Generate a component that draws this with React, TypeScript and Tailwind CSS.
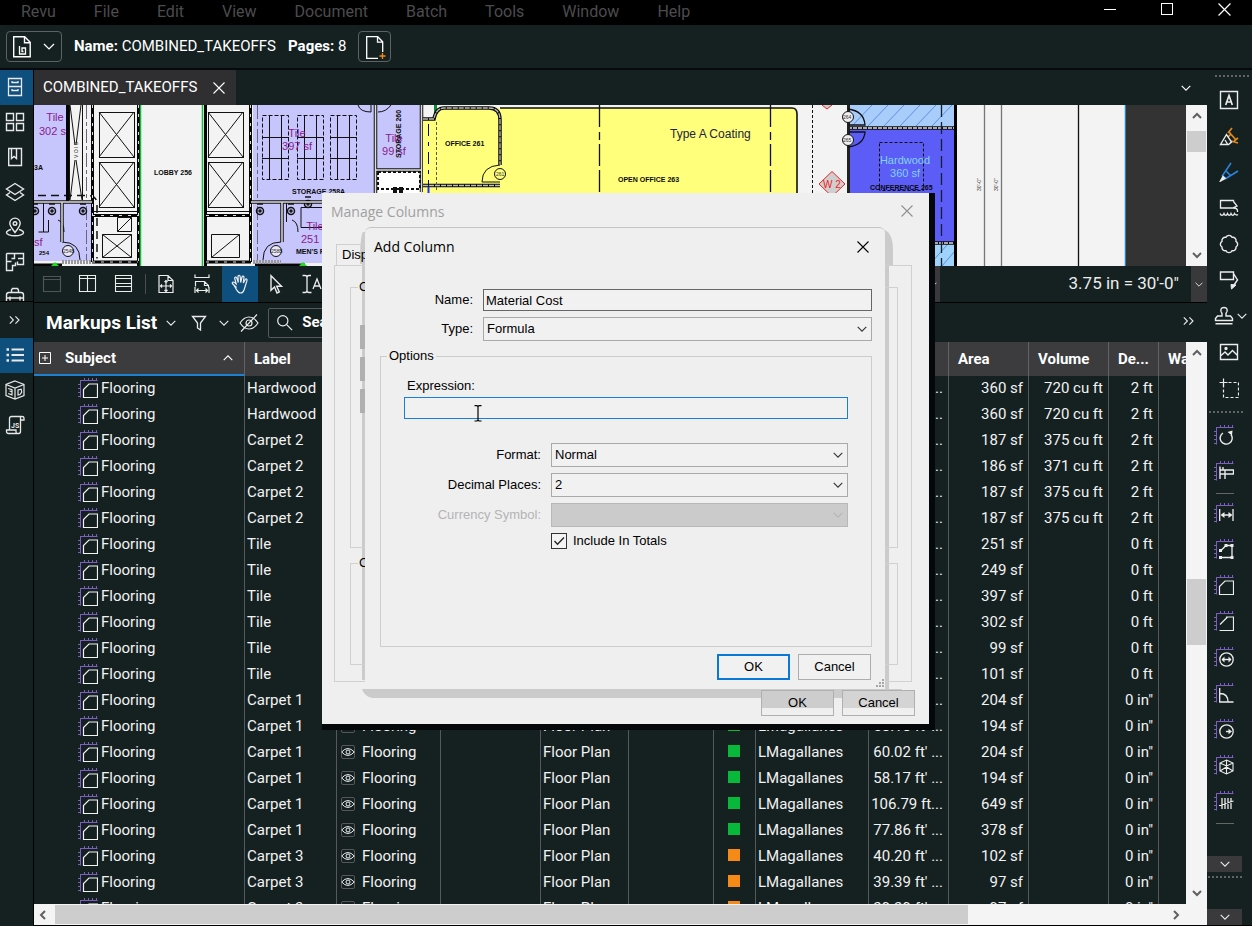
import React from "react";

type Kids = { children?: React.ReactNode };

function Icon({ children, className = "size-5" }: Kids & { className?: string }) {
  return (
    <svg viewBox="0 0 20 20" className={className} fill="none" stroke="currentColor" strokeWidth="1.4" aria-hidden="true">
      {children}
    </svg>
  );
}

function Chevron({ className = "h-[6px] w-[10px]", up = false }: { className?: string; up?: boolean }) {
  return (
    <svg viewBox="0 0 10 6" className={className} fill="none" stroke="currentColor" strokeWidth="1.1" aria-hidden="true">
      <path d={up ? "M.7 5.2 5 .9l4.3 4.3" : "M.7.8 5 5.1 9.3.8"} />
    </svg>
  );
}

function ScrollArrow({ d }: { d: string }) {
  return (
    <svg viewBox="0 0 12 12" className="size-3 shrink-0" fill="none" stroke="#606060" strokeWidth="2" aria-hidden="true">
      <path d={d} />
    </svg>
  );
}

function CloseX({ className = "size-3" }: { className?: string }) {
  return (
    <svg viewBox="0 0 12 12" className={className} fill="none" stroke="currentColor" strokeWidth="1.1" aria-hidden="true">
      <path d="M.5.5l11 11M11.5.5l-11 11" />
    </svg>
  );
}

function RulerIcon({ children }: Kids) {
  return (
    <Icon>
      <path d="M2.500 3v16.500M2 2.500h17.500" stroke="#7a5fc0" strokeWidth="1" />
      <path d="M6.500 0v2M10.500 0v2M14.500 0v2M18.500 0v2M0 6.500h2M0 10.500h2M0 14.500h2M0 18.500h2" stroke="#7a5fc0" strokeWidth="1" />
      {children}
    </Icon>
  );
}

const areaShape = <path d="M5.500 19.500v-8l5.500-5.500h8.500v13.500z" strokeWidth="1.200" />;

const menus = ["Revu", "File", "Edit", "View", "Document", "Batch", "Tools", "Window", "Help"];

function MenuBar() {
  return (
    <header className="flex h-[25px] shrink-0 items-start bg-black pl-[2px] text-[16px] leading-6 text-[#4c4c4f]">
      <nav className="flex flex-1">
        {menus.map((m) => (
          <button key={m} className="px-[19px]">{m}</button>
        ))}
      </nav>
      <div className="flex h-[18px] items-center gap-[45px] pr-[21px] text-white">
        <button aria-label="Minimize" className="h-px w-3 bg-white" />
        <button aria-label="Maximize" className="size-3 border border-white" />
        <button aria-label="Close" className="flex"><CloseX className="size-[13px]" /></button>
      </div>
    </header>
  );
}

function FileBar() {
  return (
    <div className="flex h-[45px] shrink-0 items-center border-b-2 border-[#07090c] px-[6px] text-[15px] text-white">
      <button aria-label="Document menu" className="flex h-[31px] w-[56px] items-center justify-between rounded-[4px] border border-[#5c6264] pr-[6px] pl-[5px]">
        <svg viewBox="0 0 20 24" className="h-6 w-5" fill="none" stroke="currentColor" strokeWidth="1.4" aria-hidden="true">
          <path d="M1.700 1.700h11l5.500 5.500v14.500H1.700zM12.500 1.700v6h5.700" />
          <path d="M7.500 11v8h6v-6h-3.500v3.500h1.500" strokeWidth="1.300" />
        </svg>
        <Chevron className="h-[7px] w-3" />
      </button>
      <p className="ml-3"><b className="font-bold">Name:</b> COMBINED_TAKEOFFS</p>
      <p className="ml-3"><b className="font-bold">Pages:</b> 8</p>
      <button aria-label="Add page" className="ml-3 flex h-[31px] w-[33px] items-center justify-center rounded-[4px] border border-[#5c6264]">
        <svg viewBox="0 0 22 24" className="h-6 w-[22px]" fill="none" stroke="currentColor" strokeWidth="1.3" aria-hidden="true">
          <path d="M14 23.300H2.700V1.700h11l5 5V17M13.500 1.700v5.500h5" />
          <path d="M18.500 18v6M15.500 21h6" stroke="#f28a1c" />
        </svg>
      </button>
    </div>
  );
}

const leftTop: [string, React.ReactNode][] = [
  ["File access", <path d="M3.500 1.500h13v17h-13zM3.500 9.500h13M7 4v1.500h6V4M7 12v1.500h6V12" strokeWidth="1.300" />],
  ["Thumbnails", <path d="M1.500 1.500h7v7h-7zM11.500 1.500h7v7h-7zM1.500 11.500h7v7h-7zM11.500 11.500h7v7h-7z" />],
  ["Bookmarks", <path d="M3.700 1.500h12.800v17H3.700zM6.500 1.500v10l2.500-2 2.500 2v-10" />],
  ["Layers", <><path d="M10 1.500 18.500 7 10 12.500 1.500 7z" /><path d="M5 10.500 1.500 13l8.500 5.500 8.500-5.500-3.500-2.500" /></>],
  ["Places", <><path d="M10 15.500C7 11.500 4.800 9 4.800 6.300a5.200 5.200 0 0 1 10.400 0c0 2.700-2.200 5.200-5.200 9.200z" /><circle cx="10" cy="6.500" r="1.800" /><path d="M6 12.500c-3 .8-4.500 2-4.500 3.300 0 1.600 3.800 3 8.500 3s8.500-1.400 8.500-3c0-1.300-1.500-2.500-4.500-3.300" /></>],
  ["Spaces", <path d="M1.500 1.500h17v11h-6v-3M1.500 1.500v17h6v-5h3v-3M9.500 1.500v5h-3M1.500 9.500h5M13 6.500h5.500" />],
  ["Tool chest", <path d="M1.500 8c0-1.500 1-2.500 2.500-2.500h12c1.500 0 2.500 1 2.500 2.500v10h-17zM6.500 5.500V3l1-1.500h5l1 1.500v2.500M1.500 11h17M5 9.500v4M15 9.500v4" />],
];

function LeftRail() {
  return (
    <aside className="flex w-[34px] shrink-0 flex-col border-r border-black text-[#e8e8e8]">
      <div className="flex h-[232px] shrink-0 flex-col overflow-hidden border-b border-black">
        {leftTop.map(([name, art], i) => (
          <button key={name} aria-label={name} className={i === 0 ? "flex h-[35px] shrink-0 items-center justify-center bg-[#0f4f7e] pr-[3px] pb-[2px]" : "flex h-[35px] shrink-0 items-center justify-center pr-[3px] pb-[2px]"}>
            <Icon>{art}</Icon>
          </button>
        ))}
      </div>
      <button aria-label="Expand" className="flex h-[36px] items-center justify-center pr-[3px]">
        <Icon className="size-4"><path d="m3.500 5.500 4.500 4.500-4.500 4.500M10.500 5.500 15 10l-4.500 4.500" /></Icon>
      </button>
      <button aria-label="Markups" className="flex h-[35px] items-center justify-center bg-[#0f4f7e] pr-[3px] pb-[2px]">
        <Icon><path d="M6.500 4.500H19M6.500 10H19M6.500 15.500H19" strokeWidth="1.800" /><path d="M1.500 4.500H4M1.500 10H4M1.500 15.500H4" strokeWidth="2.600" /></Icon>
      </button>
      <button aria-label="3D model tree" className="flex h-[35px] items-center justify-center pr-[3px] pb-[2px]">
        <svg viewBox="0 0 20 20" className="size-5" fill="none" stroke="currentColor" strokeWidth="1.200" aria-hidden="true">
          <path d="M10 1 19 4.500v11L10 19l-9-3.500v-11zM1 4.500 10 8l9-3.500M10 8v11" />
          <path d="M3.200 8.500 7 9.800v2l-2.500-.8 2.500.8v3l-3.800-1.300M13 10v5l2-.5 1.700-2.500-.5-2.800z" />
        </svg>
      </button>
      <button aria-label="JavaScript" className="flex h-[35px] items-center justify-center pr-[3px] pb-[2px]">
        <svg viewBox="0 0 20 20" className="size-5" fill="none" stroke="currentColor" strokeWidth="1.300" aria-hidden="true">
          <path d="M4.500 15V3.500c0-1.200.8-2 2-2H17c1.200 0 2 .8 2 1.500v2h-3.500V2M15.500 5v11.500c0 1.200-.8 2-2 2h-10c-1.200 0-2-.8-2-2V15h9.500v2c0 1 .8 1.500 2 1.500" />
          <text x="6" y="12.500" fontSize="7" fontWeight="700" fill="currentColor" stroke="none">JS</text>
        </svg>
      </button>
    </aside>
  );
}

const drawTools: [string, React.ReactNode][] = [
  ["Text box", <><path d="M1.500 1.500h17v17h-17z" /><path d="M6.700 15 10 5.500l3.300 9.500M8 12h4" strokeWidth="1.700" /></>],
  ["Highlight", <><path d="M13 2 9 7M10 6l7 8M12 8l-3 3M15 15l4-3M12 15l7 2" stroke="#e08a1e" strokeWidth="1.700" /><path d="M1.500 18.500 7.500 8.500l5 7.500-3 2.500zM6 14l2.500 4" /></>],
  ["Pen", <><path d="M12 1 3.500 13.500l3.500 3L19 9M7 9l5 5" stroke="#2a84dc" strokeWidth="1.600" /><path d="m4 14.500 2 2-4.500 2.500z" fill="currentColor" /></>],
  ["Note", <path d="M14.500 3.500v-1h-13v7.500h12l4.500-2-3.500-4.500M14.500 10c2 0 4 1 4 3v1M1 15.500c1 2.500 3 2.500 4 0 1 2.500 2.500 2.500 3.500 0 1 2.500 2.500 2.500 3.500 0 1 2.500 2.500 2.500 3.500 0 1 1.500 2 2 3.500 1" strokeWidth="1.300" />],
  ["Cloud", <path d="M7 3.300a3.300 3.300 0 0 1 6 0 3.300 3.300 0 0 1 4 4 3.300 3.300 0 0 1 0 5.700 3.300 3.300 0 0 1-4 3.700 3.300 3.300 0 0 1-6 0 3.300 3.300 0 0 1-4-3.700 3.300 3.300 0 0 1 0-5.700 3.300 3.300 0 0 1 4-4z" />],
  ["Callout", <><path d="M1.500 2h13v7.500h-13zM14.500 3.500 18.500 10 15 15" /><path d="m12 14.500 5 .5-4.500 4z" fill="currentColor" strokeWidth="1" /></>],
];

const measureTools: [string, React.ReactNode][] = [
  ["Length", <><path d="M5.700 6v12M19 6v12M8 12h9" strokeWidth="1.300" /><path d="m10.500 9-4 3 4 3zM14.500 9l4 3-4 3z" fill="currentColor" stroke="none" /></>],
  ["Polylength", <><path d="M7 11.500 12 6.500h6v12H7" strokeWidth="1.300" /><path d="M5 10h3v3H5zM10.500 5h3v3h-3zM16.500 5h3v3h-3zM16.500 17h3v3h-3zM5 17h3v3H5z" fill="currentColor" stroke="none" /></>],
  ["Area", areaShape],
  ["Polygon", <path d="M6 13.500 13.500 6M12 6h7.500v13.500H5.500" strokeWidth="1.200" />],
  ["Diameter", <><circle cx="12.500" cy="12.500" r="6.700" strokeWidth="1.300" /><path d="M8 12.500h9" /><path d="m10.500 9.500-3 3 3 3zM14.500 9.500l3 3-3 3z" fill="currentColor" stroke="none" /></>],
  ["Angle", <path d="M5.700 5v14H19.500M6 10.500c5 0 8 3 8 8.500" strokeWidth="1.300" />],
  ["Radius", <><circle cx="12.500" cy="12.500" r="6.700" strokeWidth="1.300" /><path d="M12 12.500h4" /><path d="m14.500 9.700 3.500 2.800-3.500 2.800z" fill="currentColor" stroke="none" /></>],
  ["Volume", <path d="m12.500 5 6.500 3v8l-6.500 3L6 16V8zM6 8l6.500 3L19 8M12.500 11v8M6 16l6.500-4 6.500 4M12.500 5v7" strokeWidth="1.100" />],
  ["Count", <path d="M8 7v11M11 7v11M14 7v11M17 7v11M5 14.500 19.500 10" strokeWidth="1.300" />],
];

function Dots() {
  return <div className="mx-auto h-[3px] w-[34px] border-t-2 border-dotted border-[#5f6467]" />;
}

const railBtn = "flex size-9 shrink-0 items-center justify-center";
const rulerBtn = "flex size-9 shrink-0 items-center justify-center pr-[2px] pb-[2px]";

function RightRail() {
  return (
    <aside className="flex w-[45px] shrink-0 flex-col overflow-hidden text-[#ececec]">
      <div className="flex h-3 shrink-0 items-center pl-1"><Dots /></div>
      <div className="flex flex-col pl-1">
        {drawTools.map(([name, art]) => (
          <button key={name} aria-label={name} className={railBtn}><Icon>{art}</Icon></button>
        ))}
      </div>
      <button aria-label="Stamp" className="flex h-9 shrink-0 items-center gap-[3px] pl-[7px]">
        <Icon><path d="M8 10V7.500C5.500 4 7 1.500 10 1.500s4.500 2.500 2 6V10h4.500l2 2.500v2h-17v-2L3.500 10zM1.500 17.800h17" /></Icon>
        <Chevron />
      </button>
      <div className="flex flex-col pl-1">
        <button aria-label="Image" className={railBtn}><Icon><path d="M1.500 2.500h17v15h-17zM1.500 14l4.500-4 3 3 4.500-4.500 5 5" /><circle cx="7" cy="6.500" r="1" fill="currentColor" /></Icon></button>
        <button aria-label="Snapshot" className={railBtn}><Icon><path d="M4.500 4.500h15v15h-15z" strokeDasharray="3 2" strokeWidth="1.200" /><path d="M4.500.500v8M.500 4.500h8" strokeWidth="1.200" /></Icon></button>
      </div>
      <div className="flex h-3 shrink-0 items-center pr-2"><Dots /></div>
      <button aria-label="Calibrate" className={rulerBtn}><RulerIcon><path d="M9 8a6 6 0 1 0 8 1.500" /><path d="m13.500 7 5-1.500-.5 5z" fill="currentColor" stroke="none" /></RulerIcon></button>
      <button aria-label="Measure" className={rulerBtn}><RulerIcon><path d="M6 5.500V18M6 9h13.500v4H11M11 9v9M6 13h5M9 6v3" /></RulerIcon></button>
      <div className="flex h-[6px] shrink-0 items-center justify-center pr-[10px]"><div className="h-px w-[18px] bg-[#666666]" /></div>
      {measureTools.map(([name, art]) => (
        <button key={name} aria-label={name} className={rulerBtn}><RulerIcon>{art}</RulerIcon></button>
      ))}
      <div className="flex h-[6px] shrink-0 items-center justify-center pr-[10px]"><div className="h-px w-[18px] bg-[#666666]" /></div>
      <div className="flex-1" />
      <button aria-label="More tools" className="flex h-4 w-[35px] shrink-0 items-center justify-center bg-[#3a3a3d]"><Chevron /></button>
      <div className="flex h-[37px] shrink-0 items-start pt-1 pr-[10px]"><Dots /></div>
      <button aria-label="More" className="flex h-4 w-[35px] shrink-0 items-center justify-center bg-[#3a3a3d]"><Chevron /></button>
      <div className="h-px shrink-0 bg-black" />
    </aside>
  );
}

const shafts = [[99, 112], [99, 162], [208, 112], [208, 162]];
const racks = [262, 297, 330];
const fixtures = [[35, 211], [52, 211], [83, 211], [260, 211], [291, 211], [308, 204]];

function Plan() {
  return (
    <svg viewBox="34 105 1152 161" preserveAspectRatio="xMinYMin slice" className="h-full w-full" fontFamily="'Liberation Sans', sans-serif" role="img" aria-label="Floor plan">
      <rect x="34" y="105" width="1092" height="161" fill="#f3f3f3" />
      <g fill="#c6c6fc">
        <rect x="34" y="105" width="33" height="97" />
        <rect x="34" y="202" width="58" height="59" />
        <rect x="253" y="105" width="169" height="97" />
        <rect x="253" y="202" width="80" height="61" />
      </g>
      <rect x="376" y="171" width="45" height="31" fill="#fff" />
      <g fill="none" stroke="#111" strokeWidth="1">
        {shafts.map(([x, y]) => (
          <g key={`${x}-${y}`}>
            <rect x={x + 0.5} y={y + 0.5} width="35" height="45" />
            <path d={`M${x} ${y}l35 45M${x + 35} ${y}l-35 45`} />
          </g>
        ))}
        <path d="M102.500 234.500h29v23h-29zM102.500 234.500l29 23M131.500 234.500l-29 23M117.500 217.500h14v14h-14zM117.500 231.500l14-14M211.500 234.500h28v23h-28zM211.500 257.500l28-23" />
        <path d="M69.500 105v95M82.500 105v95M70 105l5 40M81 105l-5 40M75 160l-5 40M76 160l6 40" />
        <path d="M92 211.500h46M205 211.500h46" />
        <path d="M86.500 105v95M86.500 206v56M257.500 105v95M257.500 206v56" stroke="#667" strokeDasharray="14 3 4 3" />
        <path d="M38 195.500h50q9 0 9 9v54" strokeWidth="1.500" strokeDasharray="8 5" />
        {racks.map((x) => (
          <g key={x}>
            <rect x={x + 0.5} y="115.500" width="26" height="64" strokeDasharray="4 2" />
            <path d={`M${x + 7.5} 116v63M${x + 19.5} 116v63M${x} 137.500h27M${x} 158.500h27`} />
          </g>
        ))}
        <path d="M43.500 202v30M48.500 220v12h-10M58 220q6 2 6 12M286.500 202v20M292 220q6 2 6 12M301 207.500h28v20h-28z" />
        <path d="M62 242q18 0 18 18M281 242q-18 0-18 18" />
      </g>
      <g fill="none" stroke="#111" strokeWidth="1.500">
        {fixtures.map(([x, y]) => (
          <g key={`${x}-${y}`}><circle cx={x} cy={y} r="3.500" /><circle cx={x} cy={y} r="1" /><path d={`M${x - 3} ${y - 7}h6`} /></g>
        ))}
      </g>
      <g stroke="#050505" strokeWidth="3" fill="none">
        <path d="M67.500 105v96M92.500 105v111M138.500 105v161M205.500 105v161M250.500 105v111M92 215.500h46M205 215.500h46M92.500 216v46M250.500 216v46M92 262h46M206 262h45M34 265h28M255 265h50" />
      </g>
      <g stroke="#111" strokeWidth="3.500" fill="none">
        <path d="M62 202v40M282 202v40M34 202h58M251 202h125M375.500 105v97M421.500 105v87M375 170h47" />
      </g>
      <g stroke="#ddd" strokeWidth="1" fill="none">
        <path d="M92.500 105v158M138.500 105v161M250.500 105v158M92 215.500h46M206 215.500h45M92 262h46M206 262h45" strokeDasharray="3 6" />
        <path d="M62 202v40M282 202v40M34 202h58M251 202h125M375.500 105v97M421.500 105v87M375 170h47" strokeWidth="1.500" />
      </g>
      <path d="M62 262h30M253 262h28" stroke="#999" strokeWidth="4" strokeDasharray="2 1" />
      <path d="M140.500 105v161M202.500 105v161" stroke="#0fc23c" strokeWidth="1.500" />
      <path d="m51 266 4-4 4 4zM299 266l4-4 4 4z" fill="#1fe01f" />
      <g fill="#e8e8f8" stroke="#111"><circle cx="68" cy="251" r="5.500" /><circle cx="276" cy="251" r="5.500" /></g>
      <path d="M358 105q2 7 13 7v-7M378 112q8 0 13-7" fill="none" stroke="#111" />
      <path d="M378 172h42v17h-42z" fill="none" stroke="#111" strokeWidth="2" strokeDasharray="3 2" />
      <path d="M395 187v6M401 187v6" stroke="#111" strokeWidth="4" />
      <path d="M423 120h12q2-12 10-12h347q5 0 5 6v80H423z" fill="#ffff7c" />
      <path d="M434 105h3v8h-3z" fill="#0a8a3a" />
      <path d="M500 108h292q5 0 5 6v80" fill="none" stroke="#111" strokeWidth="1.600" />
      <g fill="none">
        <path d="M423 119h11q2-11 10-11h45q11 0 11 12v45M423 185.500h77" stroke="#0a0a0a" strokeWidth="3.500" />
        <path d="M423 119h11q2-11 10-11h45q11 0 11 12v45M423 185.500h77" stroke="#bbb" strokeWidth="1.300" strokeDasharray="5 1" />
        <path d="M482 182q0-16 18-17M482 182h18" stroke="#111" />
        <path d="M428.500 124v68" stroke="#111" strokeDasharray="12 6 4 6" />
        <path d="M436.500 122v70" stroke="#555" strokeDasharray="3 2" />
        <path d="M599.500 105v22M599.500 132v8M599.500 144v22M599.500 170v22M770.500 105v22M770.500 132v8M770.500 144v22M770.500 170v22" stroke="#111" strokeWidth="1.300" />
        <path d="M428.500 187v6" stroke="#2030ff" strokeWidth="2" />
      </g>
      <circle cx="500" cy="174" r="5.500" fill="#ffff7c" stroke="#111" />
      <path d="M812.500 105v90" stroke="#111" strokeDasharray="3 2" />
      <path d="m822 105 5 4 5-4" fill="#ccc" stroke="#e22" />
      <path d="m832 171.500 13 12.500-13 12.500-13-12.500z" fill="#cfcfcf" stroke="#e22" />
      <rect x="849" y="105" width="106" height="22" fill="#a9cdfb" />
      <rect x="929" y="244" width="26" height="22" fill="#9fd3fb" />
      <path d="M852 126l20-21M868 126l20-21M884 126l20-21M900 126l20-21M916 126l20-21M932 126l20-21M930 264l18-20M942 266l12-14" stroke="#5d8fd8" />
      <rect x="849" y="129" width="106" height="113" fill="#5c5cf6" />
      <path d="M848 128h107M929 243h26" stroke="#0a0a0a" strokeWidth="3.500" />
      <path d="M848 128h107M929 243h26" stroke="#ddd" strokeWidth="1.500" strokeDasharray="4 1" />
      <path d="M848.500 105v88" stroke="#222" strokeWidth="3" />
      <path d="M848 109q16 2 17 16h-16M848 147q16-2 17-15h-16" fill="none" stroke="#111" strokeWidth="1.300" />
      <g fill="#eee" stroke="#111"><circle cx="848" cy="117" r="5.500" /><circle cx="848" cy="140" r="5.500" /></g>
      <path d="M879.500 142.500h44v48h-44z" fill="none" stroke="#111" strokeDasharray="3 2" />
      <path d="M941.500 105v161" stroke="#123" strokeDasharray="12 5" strokeWidth="1.300" />
      <path d="M955.500 105v161" stroke="#000" strokeWidth="3" />
      <path d="M984.500 105v161M1001.500 105v161" stroke="#777" strokeWidth="1.300" />
      <path d="M1078.500 105v161" stroke="#111" strokeWidth="1.300" />
      <path d="M1125.500 105v161" stroke="#1f86c8" strokeWidth="1.500" />
      <rect x="1126" y="105" width="60" height="161" fill="#333334" />
      <g fill="#8c1a8c" fontSize="11" textAnchor="middle">
        <text x="55" y="121">Tile</text>
        <text x="39" y="135" textAnchor="start">302 s</text>
        <text x="297" y="137">Tile</text>
        <text x="297" y="150">397 sf</text>
        <text x="394" y="142">Tile</text>
        <text x="394" y="155">99 sf</text>
        <text x="34" y="246" textAnchor="start">sf</text>
        <text x="315" y="230">Tile</text>
        <text x="301" y="243" textAnchor="start">251</text>
      </g>
      <g fill="#0a0a0a" fontSize="7" fontWeight="700">
        <text x="34" y="170">3A</text>
        <text x="39" y="255" fontSize="6">254</text>
        <text x="154" y="175">LOBBY  256</text>
        <text x="292" y="194">STORAGE 258A</text>
        <text x="296" y="254">MEN'S RM</text>
        <text x="445" y="146">OFFICE  261</text>
        <text x="618" y="182">OPEN OFFICE  263</text>
        <text x="870" y="190">CONFERENCE  265</text>
        <text transform="translate(401 158) rotate(-90)">STORAGE  260</text>
      </g>
      <g fill="#333" fontSize="5">
        <text x="63" y="253">254B</text>
        <text x="271" y="253">258B</text>
        <text x="496" y="176">261</text>
        <text x="843" y="119">264</text>
        <text x="843" y="142">265</text>
        <text transform="translate(78 158) rotate(-90)">V O I D</text>
        <text transform="translate(981 191) rotate(-90)">30'-0"</text>
        <text transform="translate(998 191) rotate(-90)">30'-0"</text>
      </g>
      <text x="670" y="138" fontSize="12" fill="#23233a">Type A Coating</text>
      <g fill="#7fd4f8" fontSize="11" textAnchor="middle">
        <text x="905" y="164">Hardwood</text>
        <text x="905" y="177">360 sf</text>
      </g>
      <text x="832" y="188" fontSize="10" fill="#e22" textAnchor="middle">W 2</text>
    </svg>
  );
}

const toolBtn = "flex h-9 w-9 shrink-0 items-center justify-center";

function ViewToolbar() {
  return (
    <div className="flex h-[37px] shrink-0 items-start border-b border-black text-[#ececec]">
      <button aria-label="Unsplit" className={toolBtn}><Icon className="size-5 text-[#4d5557]"><path d="M1.500 2.500h17v15h-17zM1.500 5.500h17" strokeWidth="1.200" /></Icon></button>
      <button aria-label="Split vertical" className={toolBtn}><Icon><path d="M1.500 1.500h16v16h-16zM9.500 1.500v16M1.500 4.500h16" strokeWidth="1.100" /></Icon></button>
      <button aria-label="Split horizontal" className={toolBtn}><Icon><path d="M1.500 1.500h16v16h-16zM1.500 4.500h16M1.500 9.500h16M1.500 12.500h16" strokeWidth="1.100" /></Icon></button>
      <div className="flex h-9 w-[6px] shrink-0 items-center justify-center"><div className="h-5 w-px bg-[#4d4d50]" /></div>
      <button aria-label="Fit page" className={toolBtn}><Icon><path d="M3 1.500h9l5 5v12H3zM12 1.500v5h5M10 6.500v11M4.500 12h11M8.500 8 10 6.500 11.500 8M8.500 16l1.500 1.500 1.500-1.500M6 10.500 4.500 12 6 13.500M14 10.500l1.500 1.500-1.500 1.500" strokeWidth="1.200" /></Icon></button>
      <button aria-label="Fit width" className={toolBtn}><Icon><path d="M3 .500v3h14v-3M3.500 12.500v-5h9l4 4v2M12.500 7.500v4h4M3 13v6M17 13v6M4 16.500h12M6.500 14.500l-2 2 2 2M13.500 14.500l2 2-2 2" strokeWidth="1.200" /></Icon></button>
      <button aria-label="Pan" className="ml-[2px] flex h-9 w-9 shrink-0 items-center justify-center bg-[#0f4f7e]">
        <Icon><path d="M6.500 13.500 2.500 9.800c-.9-1.200.6-2.300 1.700-1.400L6.200 10 4.700 4.500c-.3-1.500 1.500-1.900 2-.6L8.300 8.500 8 2.500c0-1.500 2-1.500 2.200 0l.5 6L12 3c.4-1.300 2.200-1 2 .5L13.300 9l2-3.500c.8-1.100 2.200-.3 1.700 1l-2.500 8c-.6 2.500-1.500 4.500-4 4.500s-3.500-2.500-5.500-6z" strokeWidth="1.200" /></Icon>
      </button>
      <button aria-label="Select" className={toolBtn}><Icon><path d="M5 1.800v14.500l3.500-3.300 2.500 6 2.300-1-2.600-5.700h4.800z" strokeWidth="1.400" /></Icon></button>
      <button aria-label="Select text" className={toolBtn}><Icon><path d="M.500 1.500h2.500q2 0 2 2v13q0 2 2 2h2.500M9 1.500H7q-2 0-2 2M5 16.500q0 2-2 2H.500M11 15l4-10 4 10M12.500 12h5" strokeWidth="1.300" /></Icon></button>
      <div className="flex-1" />
      <button aria-label="Zoom options" className="mr-[129px] flex h-9 w-[18px] items-center justify-end bg-[#39393c] pr-[3px]"><Chevron className="h-[5px] w-2" /></button>
      <span className="self-center text-[17px]">3.75 in = 30'-0"</span>
      <button aria-label="Scale options" className="ml-3 flex h-9 w-4 items-center justify-center bg-[#39393c]"><Chevron className="h-[5px] w-2" /></button>
    </div>
  );
}

function MarkupsHeader() {
  return (
    <div className="flex h-[39px] shrink-0 items-center pl-3 text-[#ececec]">
      <h2 className="text-[19px] leading-6 font-bold text-white">Markups List</h2>
      <button aria-label="List options" className="ml-[9px] flex"><Chevron /></button>
      <button aria-label="Filter" className="ml-[13px] flex"><Icon><path d="M3.500 3.500h13l-5 6.500v7l-3-2v-5z" strokeWidth="1.300" /></Icon></button>
      <button aria-label="Filter options" className="ml-[10px] flex"><Chevron /></button>
      <button aria-label="Hide markups" className="ml-[10px] flex"><Icon className="size-5"><path d="M1 10q4-6 9-6t9 6q-4 6-9 6t-9-6zM18 1.500 2 18.500" strokeWidth="1.200" /><circle cx="10" cy="10" r="3" strokeWidth="1.200" /></Icon></button>
      <label className="ml-[9px] flex h-[30px] w-[220px] items-center gap-[9px] rounded-[2px] border border-[#56595b] pl-[7px]">
        <Icon className="size-[17px] shrink-0"><circle cx="8" cy="8" r="6" /><path d="m12.500 12.500 6.500 6.500" /></Icon>
        <input aria-label="Search" placeholder="Search" className="w-full bg-transparent text-[15px] font-bold outline-none placeholder:text-white" />
      </label>
      <div className="flex-1" />
      <button aria-label="More columns" className="mr-[10px] mb-[4px] flex"><Icon className="size-4"><path d="m3.500 5.500 4.500 4.500-4.500 4.500M10.500 5.500 15 10l-4.500 4.500" /></Icon></button>
    </div>
  );
}

type Row = [label: string, area: string, volume: string, depth: string, length: string, color: string];
const green = "bg-[#08b83a]";
const orange = "bg-[#f58a16]";
const rows: Row[] = [
  ["Hardwood", "360 sf", "720 cu ft", "2 ft", "80.12 ft' ...", green],
  ["Hardwood", "360 sf", "720 cu ft", "2 ft", "80.12 ft' ...", green],
  ["Carpet 2", "187 sf", "375 cu ft", "2 ft", "57.02 ft' ...", green],
  ["Carpet 2", "186 sf", "371 cu ft", "2 ft", "57.02 ft' ...", green],
  ["Carpet 2", "187 sf", "375 cu ft", "2 ft", "57.02 ft' ...", green],
  ["Carpet 2", "187 sf", "375 cu ft", "2 ft", "57.02 ft' ...", green],
  ["Tile", "251 sf", "", "0 ft", "106.70 ft...", green],
  ["Tile", "249 sf", "", "0 ft", "106.70 ft...", green],
  ["Tile", "397 sf", "", "0 ft", "80.12 ft' ...", green],
  ["Tile", "302 sf", "", "0 ft", "106.70 ft...", green],
  ["Tile", "99 sf", "", "0 ft", "40.20 ft' ...", green],
  ["Tile", "101 sf", "", "0 ft", "40.20 ft' ...", green],
  ["Carpet 1", "204 sf", "", "0 in\"", "60.02 ft' ...", green],
  ["Carpet 1", "194 sf", "", "0 in\"", "58.18 ft' ...", green],
  ["Carpet 1", "204 sf", "", "0 in\"", "60.02 ft' ...", green],
  ["Carpet 1", "194 sf", "", "0 in\"", "58.17 ft' ...", green],
  ["Carpet 1", "649 sf", "", "0 in\"", "106.79 ft...", green],
  ["Carpet 1", "378 sf", "", "0 in\"", "77.86 ft' ...", green],
  ["Carpet 3", "102 sf", "", "0 in\"", "40.20 ft' ...", orange],
  ["Carpet 3", "97 sf", "", "0 in\"", "39.39 ft' ...", orange],
  ["Carpet 3", "97 sf", "", "0 in\"", "39.39 ft' ...", orange],
];

const cell = "border-r border-[#55595b] p-0 align-top";

function MarkupsTable() {
  return (
    <table className="w-full table-fixed border-separate border-spacing-0 text-left text-[15px] leading-6 whitespace-nowrap text-[#f2f2f2]">
      <colgroup>
        <col className="w-[211px]" /><col className="w-[92px]" /><col className="w-[104px]" /><col className="w-[100px]" />
        <col className="w-[88px]" /><col className="w-[85px]" /><col className="w-[42px]" /><col className="w-[113px]" />
        <col className="w-[80px]" /><col className="w-[80px]" /><col className="w-[80px]" /><col className="w-[50px]" /><col />
      </colgroup>
      <thead className="bg-[#3c3c3f] text-[15px] font-bold text-white">
        <tr className="h-[34px]">
          <th className="border-r border-b-2 border-r-[#626265] border-b-[#1f7fd0] p-0">
            <span className="flex items-center pr-[11px] pl-[5px]">
              <svg viewBox="0 0 12 12" className="size-3" fill="none" stroke="currentColor" aria-hidden="true"><path d="M.500.500h11v11H.500zM6 3v6M3 6h6" /></svg>
              <span className="ml-[14px] flex-1">Subject</span>
              <Chevron up />
            </span>
          </th>
          <th className="p-0 pl-[9px]">Label</th>
          {[0, 1, 2, 3, 4, 5, 6].map((i) => <td key={i} className="border-r border-[#626265]" />)}
          <th className="border-r border-[#626265] p-0 pl-[9px]">Area</th>
          <th className="border-r border-[#626265] p-0 pl-[9px]">Volume</th>
          <th className="border-r border-[#626265] p-0 pl-[9px]">De...</th>
          <th className="overflow-hidden p-0 pl-[9px]">Wa</th>
        </tr>
      </thead>
      <tbody>
        {rows.map(([label, area, volume, depth, length, color], i) => (
          <tr key={i} className="h-[26px]">
            <td className={cell}>
              <span className="flex pl-[44px]">
                <span className="pt-[2px]"><RulerIcon>{areaShape}</RulerIcon></span>
                <span className="ml-[3px]">Flooring</span>
              </span>
            </td>
            <td className={cell}><span className="pl-[2px]">{label}</span></td>
            <td className={cell}>
              <span className="flex items-center pl-1">
                <svg viewBox="0 0 14 14" className="size-[14px]" fill="none" stroke="currentColor" aria-hidden="true">
                  <rect x=".5" y=".5" width="13" height="13" rx="1.500" stroke="#54585a" />
                  <path d="M.700 7q6-7 12.600 0-6.600 7-12.600 0z" /><circle cx="7" cy="7" r="2" />
                </svg>
                <span className="ml-[7px]">Flooring</span>
              </span>
            </td>
            <td className={cell} />
            <td className={cell}><span className="pl-[2px]">Floor Plan</span></td>
            <td className={cell} />
            <td className={cell}><span className={`${color} ml-[14px] mt-[5px] block size-3`} /></td>
            <td className={cell}><span className="pl-[2px]">LMagallanes</span></td>
            <td className={cell}><span className="block pr-[5px] text-right">{length}</span></td>
            <td className={cell}><span className="block pr-[5px] text-right">{area}</span></td>
            <td className={cell}><span className="block pr-[5px] text-right">{volume}</span></td>
            <td className={cell}><span className="block pr-[5px] text-right">{depth}</span></td>
            <td className="p-0" />
          </tr>
        ))}
      </tbody>
    </table>
  );
}

function Main() {
  return (
    <main className="flex min-w-0 flex-1 flex-col border-b border-black">
      <div className="flex h-[35px] shrink-0 items-center">
        <div className="flex h-full items-center gap-4 bg-[#2f2f32] pr-[11px] pl-[9px] text-[15px] text-white">
          <span>COMBINED_TAKEOFFS</span>
          <button aria-label="Close tab" className="flex"><CloseX /></button>
        </div>
        <div className="flex-1" />
        <button aria-label="Tabs" className="mr-4 flex text-white"><Chevron /></button>
      </div>
      <div className="flex h-[161px] shrink-0">
        <div className="min-w-0 flex-1 bg-[#333334]"><Plan /></div>
        <div className="flex w-[21px] shrink-0 flex-col items-center justify-between bg-[#f4f4f4] py-[5px]">
          <ScrollArrow d="m2 8 4-4 4 4" />
          <div className="mb-[88px] h-[21px] w-[19px] bg-[#cdcdcd]" />
          <ScrollArrow d="m2 4 4 4 4-4" />
        </div>
      </div>
      <ViewToolbar />
      <MarkupsHeader />
      <div className="flex min-h-0 flex-1">
        <div className="min-w-0 flex-1 overflow-hidden"><MarkupsTable /></div>
        <div className="flex w-[21px] shrink-0 flex-col items-center bg-[#f4f4f4] py-[5px]">
          <ScrollArrow d="m2 8 4-4 4 4" />
          <div className="grow-[220]" />
          <div className="h-[66px] w-[19px] bg-[#cdcdcd]" />
          <div className="grow-[242]" />
          <ScrollArrow d="m2 4 4 4 4-4" />
        </div>
      </div>
      <div className="flex h-[21px] shrink-0 items-center bg-[#f4f4f4] pr-[25px] pl-[3px]">
        <ScrollArrow d="m8 2-4 4 4 4" />
        <div className="ml-[6px] h-[19px] grow-[913] bg-[#cdcdcd]" />
        <div className="grow-[202]" />
        <ScrollArrow d="m4 2 4 4-4 4" />
      </div>
    </main>
  );
}

function Select({ id, value, disabled = false }: { id: string; value: string; disabled?: boolean }) {
  return (
    <span className="grid items-center">
      <select
        id={id}
        defaultValue={value}
        disabled={disabled}
        className="col-start-1 row-start-1 h-6 w-full appearance-none border border-[#a9a9a9] bg-[#f1f1f1] px-[3px] text-black disabled:border-[#b8b8b8] disabled:bg-[#cbcbcb]"
      >
        <option>{value}</option>
      </select>
      <Chevron className={disabled ? "col-start-1 row-start-1 mr-[5px] h-[6px] w-[10px] justify-self-end text-[#b5b5b5]" : "col-start-1 row-start-1 mr-[5px] h-[6px] w-[10px] justify-self-end text-[#333]"} />
    </span>
  );
}

function ManageColumns() {
  return (
    <section aria-label="Manage Columns" className="absolute top-[193px] left-[322px] flex h-[531px] w-[607px] flex-col bg-[#efefef] text-[13px] text-black shadow-[3px_3px_0_3px_#05080a]">
      <svg viewBox="322 193 607 531" className="pointer-events-none absolute inset-0 size-full" aria-hidden="true">
        <path d="M360 264q0-28 3-32h10v32zM362 260h5v420h-5zM885 230q8 4 8 20v15h-8zM885 240h4v450h-4zM362 689h540l-4 9H372q-8-2-10-9z" fill="#cbcbcb" />
        <path d="M360 325h6v24h-6zM360 357h6v24h-6zM360 389h6v24h-6z" fill="#b0b0b0" />
      </svg>
      <div className="relative flex h-9 shrink-0 items-center justify-between pr-4 pl-[9px]">
        <h2 className="font-['Open_Sans',sans-serif] text-[14px] text-[#a0a0a0]">Manage Columns</h2>
        <button aria-label="Close Manage Columns" className="flex text-[#909090]"><CloseX /></button>
      </div>
      <div className="relative mt-[15px] ml-[14px] h-[21px] w-[90px] shrink-0 border border-b-0 border-[#cfcfcf] pl-[5px] leading-5">Disp</div>
      <div className="relative mr-[17px] ml-3 flex flex-1 flex-col border border-[#d0d0d0] pt-[13px] pr-[13px] pb-4 pl-[15px]">
        <fieldset className="h-[269px] border border-[#d0d0d0] pl-[7px]"><legend className="px-px leading-4">C</legend></fieldset>
        <fieldset className="mt-[7px] min-h-0 flex-1 border border-[#d0d0d0] pl-[7px]"><legend className="px-px leading-4">C</legend></fieldset>
      </div>
      <div className="relative mt-2 mr-[14px] mb-2 flex justify-end gap-2">
        <button className="h-[26px] w-[73px] border border-[#b0b0b0] bg-linear-to-b from-[#cdcdcd] from-70% to-[#efefef] to-70%">OK</button>
        <button className="h-[26px] w-[73px] border border-[#b0b0b0] bg-linear-to-b from-[#d4d4d4] from-70% to-[#efefef] to-70%">Cancel</button>
      </div>
    </section>
  );
}

function AddColumn() {
  return (
    <section role="dialog" aria-label="Add Column" className="absolute top-[227px] left-[365px] flex h-[462px] w-[520px] flex-col rounded-[6px] border-t border-[#c4c4c4] bg-[#efefef] text-[13px] leading-4 text-black">
      <div className="flex h-[37px] shrink-0 items-center justify-between pr-4 pl-[9px]">
        <h2 className="font-['Open_Sans',sans-serif] text-[14px]">Add Column</h2>
        <button aria-label="Close Add Column" className="flex"><CloseX /></button>
      </div>
      <div className="mt-6 mr-[13px] grid grid-cols-[108px_1fr] items-center gap-x-[10px] gap-y-[6px]">
        <label htmlFor="name" className="text-right">Name:</label>
        <input id="name" defaultValue="Material Cost" className="h-[22px] border border-[#666666] bg-[#f1f1f1] px-[2px] outline-none" />
        <label htmlFor="type" className="text-right">Type:</label>
        <Select id="type" value="Formula" />
      </div>
      <fieldset className="mt-[7px] mr-[13px] ml-[15px] flex min-h-0 flex-1 flex-col border border-[#cdcdcd] px-[23px]">
        <legend className="-ml-[17px] px-[2px]">Options</legend>
        <label htmlFor="expression" className="mt-[14px] pl-[3px]">Expression:</label>
        <input id="expression" className="mt-[3px] h-[22px] w-full border border-[#1a7fd4] bg-[#f1f1f1] px-[2px] outline-none" />
        <div className="mt-6 grid grid-cols-[137px_1fr] items-center gap-x-[10px] gap-y-[6px]">
          <label htmlFor="format" className="text-right">Format:</label>
          <Select id="format" value="Normal" />
          <label htmlFor="places" className="text-right">Decimal Places:</label>
          <Select id="places" value="2" />
          <label htmlFor="currency" className="text-right text-[#b4b4b4]">Currency Symbol:</label>
          <Select id="currency" value="" disabled />
          <label className="col-start-2 flex items-center gap-[6px]">
            <span className="grid size-4">
              <input type="checkbox" defaultChecked className="col-start-1 row-start-1 size-4 appearance-none border border-[#333] bg-[#f4f4f4]" />
              <svg viewBox="0 0 16 16" className="pointer-events-none col-start-1 row-start-1 size-4" fill="none" stroke="#222" strokeWidth="1.300" aria-hidden="true"><path d="m3.500 8 3 3.300L13 4.500" /></svg>
            </span>
            Include In Totals
          </label>
        </div>
      </fieldset>
      <div className="mt-[7px] mr-[14px] mb-[9px] flex shrink-0 justify-end gap-2">
        <button className="h-[26px] w-[73px] border-2 border-[#0a78d6] bg-[#f1f1f1]">OK</button>
        <button className="h-[26px] w-[73px] border border-[#adadad] bg-[#f1f1f1]">Cancel</button>
      </div>
      <svg viewBox="0 0 10 10" className="absolute right-0 bottom-px size-[10px]" fill="#a8a8a8" aria-hidden="true">
        <path d="M7 1h2v2H7zM4 4h2v2H4zM7 4h2v2H7zM1 7h2v2H1zM4 7h2v2H4zM7 7h2v2H7z" />
      </svg>
      <svg viewBox="0 0 8 17" className="pointer-events-none absolute top-[177px] left-[109px] h-[17px] w-2" fill="none" stroke="#000" strokeWidth="1.200" aria-hidden="true">
        <path d="M.500.700H3l1 1 1-1h2.500M4 1.500v14M.500 16H3l1-1 1 1h2.500" />
      </svg>
    </section>
  );
}

export default function App() {
  return (
    <div className="relative flex h-screen flex-col overflow-hidden bg-[#152121] font-[Roboto,sans-serif]">
      <MenuBar />
      <FileBar />
      <div className="flex min-h-0 flex-1">
        <LeftRail />
        <Main />
        <RightRail />
      </div>
      <div className="font-['Liberation_Sans',sans-serif]">
        <ManageColumns />
        <AddColumn />
      </div>
    </div>
  );
}
